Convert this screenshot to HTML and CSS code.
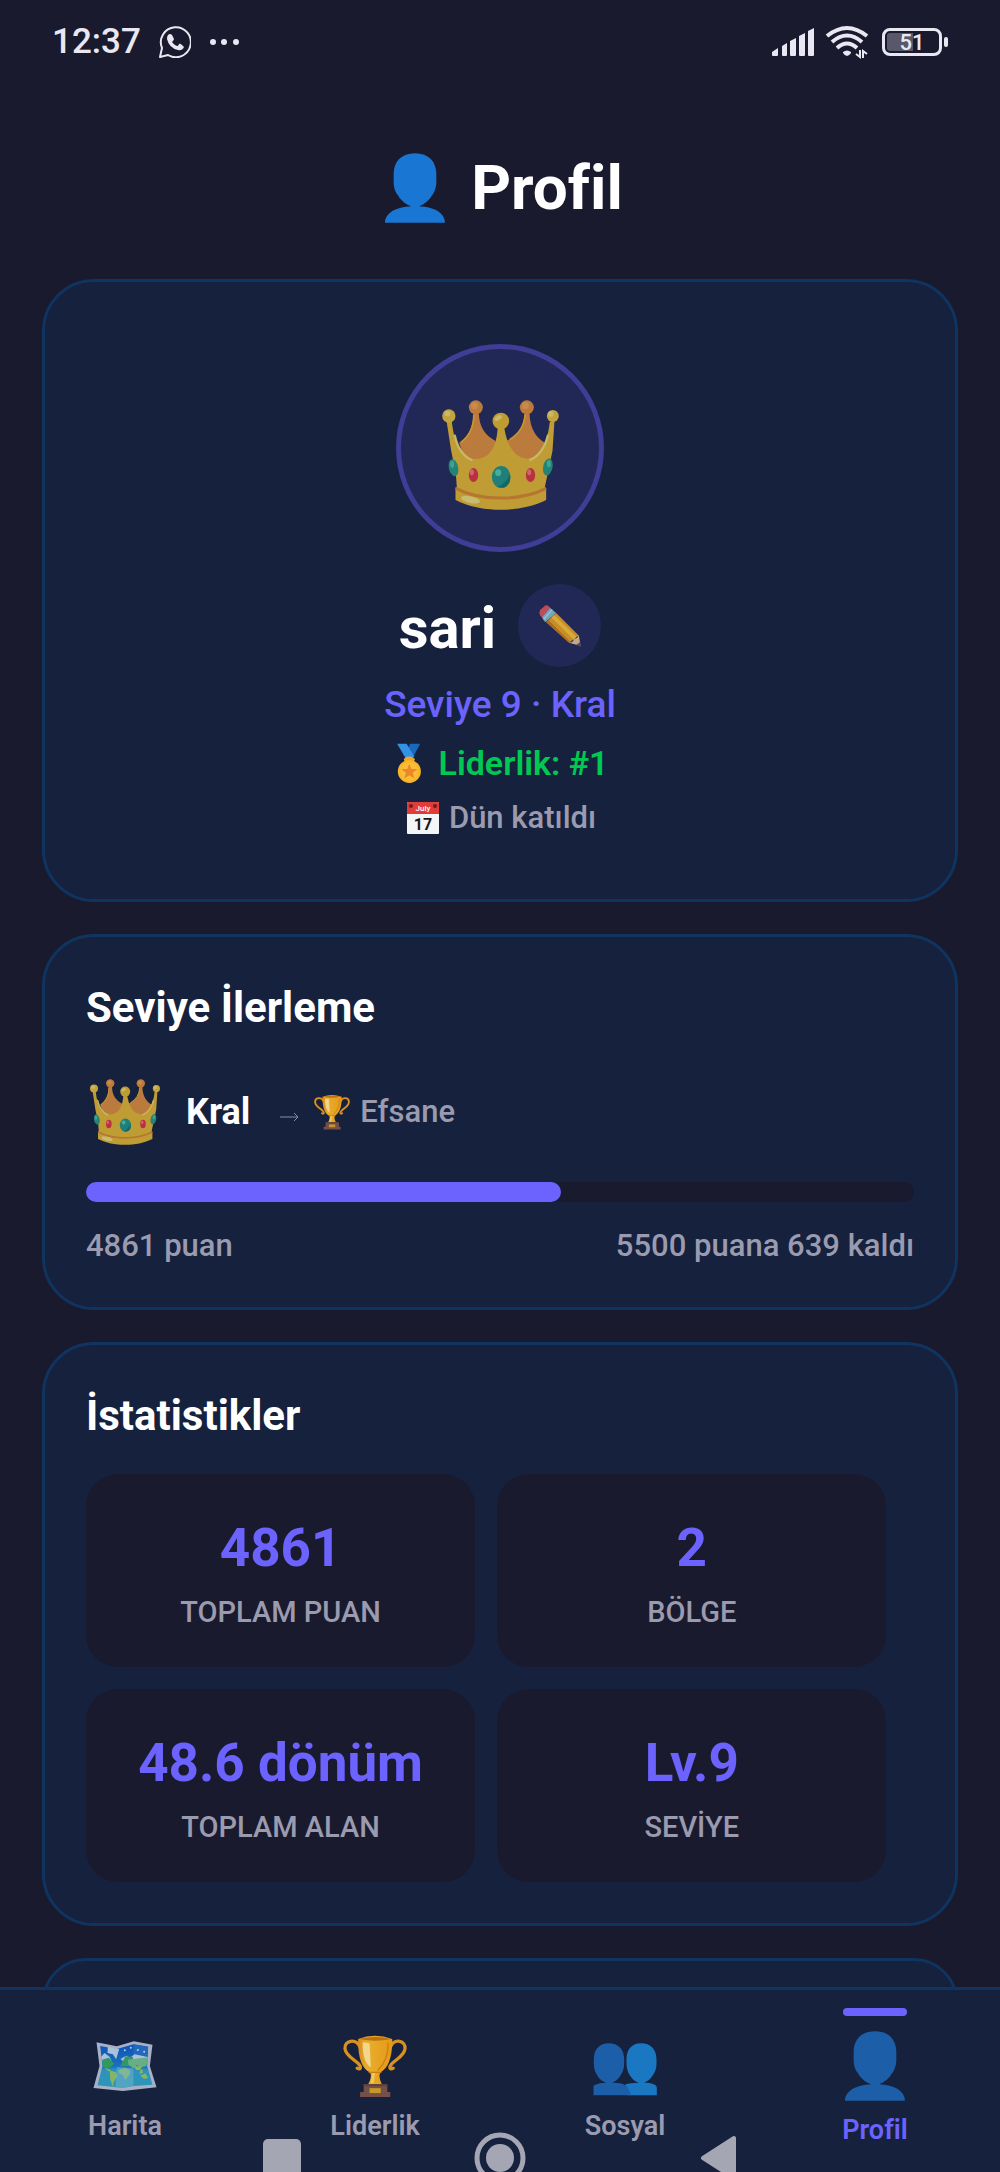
FILE: index.html
```html
<!DOCTYPE html>
<html lang="tr">
<head>
<meta charset="utf-8">
<meta name="viewport" content="width=device-width, initial-scale=1">
<title>Profil</title>
<link rel="stylesheet" href="styles.css">
</head>
<body>
<svg class="sprite" aria-hidden="true">
  <defs>
    <linearGradient id="map-sea" x1="0" y1="0" x2="0" y2="1">
      <stop offset="0" stop-color="#0e55bb"/><stop offset=".5" stop-color="#1b6fbd"/><stop offset=".6" stop-color="#2b93bd"/><stop offset="1" stop-color="#2f95b5"/>
    </linearGradient>
    <linearGradient id="cup-gold" x1="0" x2="1">
      <stop offset="0" stop-color="#d98a1c"/><stop offset=".25" stop-color="#e9ad2e"/><stop offset="1" stop-color="#e59a17"/>
    </linearGradient>
  </defs>
  <symbol id="person" viewBox="1158 458 180 209">
    <path d="M1248 458C1290 458 1312 484 1312 520V545C1312 562 1304 580 1298 586C1288 604 1270 614 1261 617C1306 619 1338 637 1338 667H1158C1158 637 1191 619 1237 617C1226 614 1206 602 1197 584C1190 577 1184 562 1184 545V520C1184 484 1206 458 1248 458Z"/>
  </symbol>
  <symbol id="people" viewBox="281 317 191 192">
    <path fill="#1a78c2" d="M425 345C453 345 471 363 471 393V408C471 434 449 460 434 463C455 463 472 468 472 478V501H385L378 468Q392 463 418 463C398 458 381 432 381 408V393C381 363 397 345 425 345Z"/>
    <path fill="#1c5ea8" d="M328 345C356 345 374 363 374 393V408C374 434 353 460 338 463C360 463 374 466 382 474L396 501H282V472Q296 463 320 463C302 460 283 434 283 408V393C283 363 300 345 328 345Z"/>
  </symbol>
  <symbol id="crown" viewBox="275 238 350 330">
    <path fill="#bb7b3d" d="M368 278C369 325 350 350 326 366L345 425H560L583 366C558 352 538 325 537 278H522C520 325 500 350 468 360L450 400L434 360C405 345 386 320 385 278Z"/>
    <circle cx="376" cy="260" r="21" fill="#bb7b3d"/><circle cx="529" cy="260" r="21" fill="#bb7b3d"/>
    <circle cx="372" cy="255" r="10" fill="#c98b4b"/><circle cx="525" cy="255" r="10" fill="#c98b4b"/>
    <path fill="none" stroke="#c8952f" stroke-width="5" d="M370 282Q370 335 332 365M524 282Q520 332 477 357"/>
    <path fill="#bf9c34" d="M288 300L304 303C313 380 335 415 378 415C420 412 440 375 442 312H460C468 375 492 414 532 414C570 410 590 370 598 303L612 300L606 390L583 500Q587 500 587 506V538C510 577 390 577 315 538V500H319L316 460L302 390Z"/>
    <circle cx="295" cy="286" r="20" fill="#c3a33b"/><circle cx="607" cy="286" r="18" fill="#c3a33b"/><circle cx="451" cy="301" r="25" fill="#bf9c30"/>
    <ellipse cx="291" cy="279" rx="9" ry="8" fill="#ccb86b"/><ellipse cx="601" cy="280" rx="8" ry="9" fill="#ccb86b"/><ellipse cx="443" cy="292" rx="12" ry="7" fill="#ccb86b" transform="rotate(-30 443 292)"/>
    <path fill="none" stroke="#c9b864" stroke-width="7" stroke-linecap="round" d="M313 345Q325 400 363 418M592 345Q578 400 540 417"/>
    <path fill="none" stroke="#b5762f" stroke-width="9" d="M316 503C390 542 510 542 587 503"/>
    <ellipse cx="360" cy="537" rx="29" ry="10" fill="#c8bc70" transform="rotate(12 360 537)"/>
    <ellipse cx="309" cy="441" rx="14" ry="26" fill="#248277" transform="rotate(-12 309 441)"/><ellipse cx="592" cy="439" rx="14" ry="26" fill="#248277" transform="rotate(12 592 439)"/>
    <ellipse cx="305" cy="431" rx="6" ry="11" fill="#3ba58d"/><ellipse cx="595" cy="429" rx="6" ry="11" fill="#3ba58d"/>
    <ellipse cx="452" cy="469" rx="28" ry="33" fill="#208079"/><path fill="#0f6a67" d="M440 499Q466 490 478 460Q484 492 460 501Z"/><ellipse cx="443" cy="456" rx="9" ry="10" fill="#46ac9d"/>
    <ellipse cx="369" cy="463" rx="14" ry="21" fill="#b93140"/><ellipse cx="540" cy="463" rx="14" ry="21" fill="#b93140"/>
    <ellipse cx="364" cy="455" rx="6" ry="9" fill="#cf6470"/><ellipse cx="536" cy="455" rx="6" ry="9" fill="#cf6470"/>
  </symbol>
  <symbol id="trophy" viewBox="1028 309 195 191">
    <path fill="none" stroke="#d8901f" stroke-width="10" stroke-linecap="round" d="M1079 345C1066 320 1032 326 1034 352C1038 382 1085 392 1081 411Q1078 416 1071 411M1173 345C1186 320 1219 326 1217 352C1213 382 1168 392 1171 411Q1174 416 1181 411"/>
    <path fill="url(#cup-gold)" d="M1074 322Q1125 302 1178 322C1179 380 1165 412 1142 424Q1134 436 1147 462H1104Q1118 436 1110 424C1086 412 1073 380 1074 322Z"/>
    <path fill="#b9720e" d="M1077 322Q1125 310 1175 322Q1125 333 1077 322Z"/>
    <path fill="#f2d68b" d="M1088 332L1109 335L1113 409Q1086 390 1088 332Z"/>
    <path fill="none" stroke="#c97e14" stroke-width="4" d="M1165 334Q1168 385 1134 418M1106 424H1145"/>
    <path fill="#f0c860" d="M1117 426H1126L1121 457H1112Z"/>
    <path fill="#75504a" d="M1091 460H1163V484H1172V499H1080V484H1091Z"/><path fill="#604039" d="M1091 460H1163V466H1091Z"/>
    <rect x="1109" y="472" width="34" height="15" fill="#c69824"/>
  </symbol>
  <symbol id="map" viewBox="281 309 191 192">
    <path fill="#a7b0c6" d="M291 334L352 346L403 331L459 341L451 405L471 469L370 480L282 471L300 405Z"/>
    <path fill="url(#map-sea)" d="M302 345L352 354L402 340L446 347L443 405L459 461L404 465L370 471L294 463L309 405Z"/>
    <path fill="#2269bd" d="M402 340L446 347L443 390L402 385Z"/>
    <path fill="#adc1d6" d="M305 378L315 366L330 377L336 390H308ZM363 384L380 374L392 380L405 370L445 378L443 390H370ZM325 347L343 351L359 354L350 385L340 370L324 366Z"/>
    <path fill="#319763" d="M308 386L328 380L344 398L333 408L322 414L309 405ZM362 406L378 376L400 378L402 405Z"/>
    <path fill="#66ae84" d="M385 386L445 379L441 405L424 409L411 403L402 412L387 402Z"/>
    <path fill="#86b663" d="M315 411L333 416L336 422L325 419ZM331 419L349 423L354 435L342 454L341 470L332 444ZM357 417L376 410L392 418L391 430L377 447L370 432L358 427ZM402 406H428L421 417H410ZM422 434L438 427L446 441L434 444ZM422 417L429 414L430 426L420 429Z"/>
    <path fill="#7fb8ce" opacity=".45" d="M352 408L402 412V465L370 471L348 467Z"/>
    <g fill="#bdcbe0"><circle cx="376" cy="358" r="3"/><circle cx="394" cy="350" r="3"/><circle cx="415" cy="357" r="3"/><circle cx="434" cy="362" r="3"/></g>
  </symbol>
</svg>

<div class="app">
  <header class="status">
    <div class="status-group">
      <time class="clock">12:37</time>
      <svg class="wa" width="32" height="32" viewBox="0 0 32 32" aria-label="WhatsApp" role="img">
        <path fill="none" stroke="#e9e8f2" stroke-width="2" stroke-linejoin="round" d="M1 31L3 22A15 15 0 1 1 9 29Z"/>
        <path fill="#e9e8f2" d="M9 9Q11 7 13 9L15 13Q15 14 13 16Q16 20 19 20L20 18Q21 17 23 19L25 21Q23 25 19 24Q10 22 8 13Q8 10 9 9Z"/>
      </svg>
      <svg width="30" height="8" viewBox="0 0 30 8" fill="#e9e8f2" aria-hidden="true"><circle cx="4" cy="4" r="3"/><circle cx="15" cy="4" r="3"/><circle cx="27" cy="4" r="3"/></svg>
    </div>
    <div class="status-group status-right">
      <svg width="42" height="32" viewBox="0 0 42 32" fill="#e9e8f2" aria-hidden="true">
        <path d="M0 26L6 22V29Q6 30 5 30H1Q0 30 0 29ZM10 20L15 17V29Q15 30 14 30H11Q10 30 10 29ZM18 15L24 12V29Q24 30 23 30H19Q18 30 18 29ZM27 10L33 7V29Q33 30 32 30H28Q27 30 27 29ZM36 5L42 2V29Q42 30 41 30H37Q36 30 36 29Z"/>
      </svg>
      <svg width="44" height="34" viewBox="0 0 44 34" aria-hidden="true">
        <g fill="none" stroke="#e9e8f2" stroke-width="4"><path d="M2 11Q22 -5 42 11M7 17Q22 4 37 17M12 23Q22 14 32 23"/></g>
        <path fill="#e9e8f2" d="M18 27Q22 24 26 27V28Q22 34 18 28Z"/>
        <path fill="none" stroke="#e9e8f2" stroke-width="2" d="M35 25V32L31 29M38 33V26L42 29"/>
      </svg>
      <div class="battery"><span class="battery-text">51</span></div>
    </div>
  </header>

  <main class="content">
    <h1 class="title"><svg class="title-icon" width="60" height="70" aria-hidden="true"><use href="#person"/></svg>Profil</h1>

    <section class="card profile">
      <div class="avatar"><svg width="117" height="110" aria-hidden="true"><use href="#crown"/></svg></div>
      <div class="name-row">
        <h2 class="name">sari</h2>
        <button class="edit" type="button" aria-label="Düzenle">
          <svg width="42" height="42" viewBox="564 138 127 127" aria-hidden="true">
            <path fill="#bd4c5b" d="M568 152L584 139Q594 138 600 151L578 179Q559 168 568 152Z"/>
            <path fill="#6fa5bd" d="M598 147L616 162L583 190L573 176Z"/><path fill="none" stroke="#9dc0cd" stroke-width="4" d="M604 152L578 182"/>
            <path fill="#c98d27" d="M616 162L684 230L655 252L586 190Z"/>
            <path fill="#d6aa3b" d="M610 168L677 234L668 242L602 176Z"/><path fill="#a96d20" d="M593 184L659 250L655 252L586 190Z"/>
            <path fill="#c2a98b" d="M684 228L690 262L655 252Q670 250 669 240Q682 240 684 228Z"/>
            <path fill="#51484f" d="M688 251L691 265L676 259Z"/>
          </svg>
        </button>
      </div>
      <p class="level">Seviye 9 · Kral</p>
      <p class="rank">
        <svg width="24" height="40" viewBox="142 552 70 118" aria-hidden="true">
          <path fill="#1769c0" d="M210 554H180L165 592H190Z"/><path fill="#3391e8" d="M142 554H170L193 593L167 597Z"/>
          <ellipse cx="178" cy="601" rx="16" ry="9" fill="#f3a51c"/>
          <circle cx="178" cy="636" r="34" fill="#f9b427"/><circle cx="178" cy="636" r="27" fill="#fbbc37"/>
          <path fill="#ed8627" d="M178 613L184 629H202L188 640L193 657L178 647L163 657L168 640L154 629H172Z"/>
        </svg>Liderlik: #1</p>
      <p class="joined">
        <svg width="32" height="32" viewBox="0 0 32 32" aria-hidden="true">
          <rect width="32" height="32" rx="1" fill="#f4f5f7"/><path fill="#e23c38" d="M0 1Q0 0 1 0H31Q32 0 32 1V12H0Z"/>
          <circle cx="4" cy="4" r="2" fill="#612129"/><circle cx="28" cy="4" r="2" fill="#612129"/>
          <text class="cal-month" x="16" y="9">July</text><text class="cal-day" x="16" y="28">17</text>
        </svg>Dün katıldı</p>
    </section>

    <section class="card">
      <h2 class="card-title">Seviye İlerleme</h2>
      <div class="level-row">
        <svg width="70" height="66" aria-hidden="true"><use href="#crown"/></svg>
        <span class="level-name">Kral</span>
        <span class="next">
          <svg class="arrow" width="20" height="20" viewBox="0 0 20 20" aria-hidden="true"><path fill="none" stroke="#8b8ca2" stroke-width="1" d="M0 15H18M14 11L18 15L14 19"/></svg>
          <svg width="36" height="36" aria-hidden="true"><use href="#trophy"/></svg>
          <span>Efsane</span>
        </span>
      </div>
      <div class="track" role="progressbar" aria-label="Seviye İlerleme" aria-valuemin="0" aria-valuemax="100" aria-valuenow="57"><div class="fill" style="width:57.4%"></div></div>
      <div class="points"><span>4861 puan</span><span>5500 puana 639 kaldı</span></div>
    </section>

    <section class="card">
      <h2 class="card-title">İstatistikler</h2>
      <div class="stats">
        <div class="stat"><strong class="stat-value">4861</strong><span class="stat-label">TOPLAM PUAN</span></div>
        <div class="stat"><strong class="stat-value">2</strong><span class="stat-label">BÖLGE</span></div>
        <div class="stat"><strong class="stat-value">48.6 dönüm</strong><span class="stat-label">TOPLAM ALAN</span></div>
        <div class="stat"><strong class="stat-value">Lv.9</strong><span class="stat-label">SEVİYE</span></div>
      </div>
    </section>

    <section class="card"></section>
  </main>

  <footer class="bottom">
    <nav class="tabs">
      <a class="tab" href="#harita"><span class="tab-icon"><svg width="64" height="64" aria-hidden="true"><use href="#map"/></svg></span>Harita</a>
      <a class="tab" href="#liderlik"><span class="tab-icon"><svg width="64" height="64" aria-hidden="true"><use href="#trophy"/></svg></span>Liderlik</a>
      <a class="tab" href="#sosyal"><span class="tab-icon"><svg width="64" height="64" aria-hidden="true"><use href="#people"/></svg></span>Sosyal</a>
      <a class="tab tab-active" href="#profil" aria-current="page"><span class="tab-icon"><svg width="60" height="70" aria-hidden="true"><use href="#person"/></svg></span>Profil</a>
    </nav>
    <div class="system">
      <button class="sys" type="button" aria-label="Son uygulamalar"><svg width="52" height="52" viewBox="0 0 52 52"><rect x="7" y="7" width="38" height="38" rx="5" fill="#a4a7b3"/></svg></button>
      <button class="sys" type="button" aria-label="Ana ekran"><svg width="52" height="52" viewBox="0 0 52 52"><circle cx="26" cy="26" r="23" fill="none" stroke="#a4a7b3" stroke-width="5"/><circle cx="26" cy="26" r="14" fill="#a4a7b3"/></svg></button>
      <button class="sys" type="button" aria-label="Geri"><svg width="52" height="52" viewBox="0 0 52 52"><path d="M11 26L42 6V46Z" fill="#a4a7b3" stroke="#a4a7b3" stroke-width="4" stroke-linejoin="round"/></svg></button>
    </div>
  </footer>
</div>
</body>
</html>
```
FILE: styles.css
```css
:root {
  --bg: #1a1a2e;
  --card: #16213e;
  --line: #0f3460;
  --accent: #6c63ff;
  --muted: #9b9bb0;
}

* { box-sizing: border-box; }

body {
  margin: 0;
  background: var(--bg);
  color: #fff;
  font-family: Roboto, "Noto Sans", sans-serif;
}

h1, h2, p { margin: 0; }
svg { display: block; flex: none; }
button { border: 0; padding: 0; background: none; }

.sprite { position: absolute; width: 0; height: 0; }

.app {
  display: flex;
  flex-direction: column;
  height: 100vh;
}

/* Status bar */
.status {
  display: flex;
  justify-content: space-between;
  align-items: center;
  height: 84px;
  padding: 0 52px;
  flex: none;
  color: #e9e8f2;
}
.status-group { display: flex; align-items: center; gap: 18px; }
.status-right { gap: 11px; }
.clock { font-size: 35px; font-weight: 500; line-height: 42px; }
.battery {
  position: relative;
  width: 60px;
  height: 28px;
  margin: 0 6px 0 2px;
  border: 3px solid #e9e8f2;
  border-radius: 8px;
  background: linear-gradient(90deg, #59586b 52%, transparent 52%) content-box;
  padding: 2px;
}
.battery::after {
  content: "";
  position: absolute;
  right: -9px;
  top: 6px;
  width: 4px;
  height: 10px;
  border-radius: 2px;
  background: #e9e8f2;
}
.battery-text {
  display: block;
  font-size: 22px;
  font-weight: 500;
  line-height: 20px;
  text-align: center;
}

/* Scrolling content */
.content {
  flex: 1;
  min-height: 0;
  overflow-y: auto;
  scrollbar-width: none;
  padding: 0 42px 32px;
}
.title {
  display: flex;
  justify-content: center;
  align-items: center;
  gap: 26px;
  padding: 66px 0 53px 8px;
  font-size: 62px;
  line-height: 76px;
  font-weight: 700;
}
.title-icon { fill: #1976d2; }

.card {
  margin-bottom: 32px;
  padding: 41px;
  border: 3px solid var(--line);
  border-radius: 52px;
  background: var(--card);
}
.card-title { font-size: 42px; font-weight: 700; line-height: 60px; }

/* Profile card */
.profile {
  display: flex;
  flex-direction: column;
  align-items: center;
  padding: 62px 41px;
}
.avatar {
  display: grid;
  place-items: center;
  width: 208px;
  height: 208px;
  margin-bottom: 32px;
  padding-top: 14px;
  border: 5px solid #403d96;
  border-radius: 50%;
  background: #212856;
}
.name-row { display: flex; align-items: center; gap: 22px; }
.name { padding-top: 4px; font-size: 58px; font-weight: 700; line-height: 68px; }
.edit {
  display: grid;
  place-items: center;
  width: 83px;
  height: 83px;
  border-radius: 50%;
  background: #212856;
}
.level {
  margin-top: 17px;
  color: var(--accent);
  font-size: 37px;
  font-weight: 500;
  line-height: 42px;
}
.rank, .joined { display: flex; align-items: center; }
.rank {
  gap: 18px;
  margin-top: 16px;
  padding-left: 5px;
  color: #00c853;
  font-size: 34px;
  font-weight: 600;
  line-height: 42px;
}
.joined {
  gap: 10px;
  margin-top: 15px;
  padding-left: 3px;
  color: var(--muted);
  font-size: 31px;
  font-weight: 500;
  line-height: 38px;
}
.cal-month { font-size: 8px; font-weight: 500; fill: #fff; text-anchor: middle; }
.cal-day { font-size: 16px; font-weight: 700; fill: #16161a; text-anchor: middle; }

/* Level progress */
.level-row {
  display: flex;
  align-items: center;
  gap: 26px;
  margin: 41px 0 37px 4px;
}
.level-name { font-size: 36px; font-weight: 700; line-height: 42px; }
.next {
  display: flex;
  align-items: center;
  gap: 10px;
  margin-left: 4px;
  color: var(--muted);
  font-size: 31px;
  font-weight: 500;
  line-height: 36px;
}
.arrow { margin-right: 4px; }
.track {
  height: 20px;
  border-radius: 10px;
  background: var(--bg);
}
.fill { height: 20px; border-radius: 10px; background: var(--accent); }
.points {
  display: flex;
  justify-content: space-between;
  margin-top: 24px;
  color: var(--muted);
  font-size: 31px;
  font-weight: 500;
  line-height: 40px;
}

/* Statistics */
.stats {
  display: grid;
  grid-template-columns: 47% 47%;
  gap: 22px;
  margin-top: 28px;
}
.stat {
  display: flex;
  flex-direction: column;
  align-items: center;
  gap: 15px;
  padding: 42px 20px 37px;
  border-radius: 32px;
  background: var(--bg);
}
.stat-value { color: var(--accent); font-size: 53px; font-weight: 700; line-height: 64px; }
.stat-label { color: var(--muted); font-size: 29px; font-weight: 500; line-height: 35px; }

/* Bottom navigation */
.bottom {
  position: relative;
  flex: none;
  border-top: 3px solid var(--line);
  background: var(--card);
}
.tabs { display: grid; grid-template-columns: repeat(4, 1fr); padding: 18px 0 25px; }
.tab {
  position: relative;
  display: flex;
  flex-direction: column;
  align-items: center;
  gap: 8px;
  padding-top: 23px;
  color: var(--muted);
  font-size: 27px;
  font-weight: 600;
  line-height: 34px;
  text-decoration: none;
}
.tab-icon { display: flex; align-items: center; height: 70px; }
.tab-active { gap: 12px; color: var(--accent); }
.tab-active .tab-icon { fill: #1c5ea8; }
.tab-active::before {
  content: "";
  position: absolute;
  top: 0;
  width: 64px;
  height: 8px;
  border-radius: 4px;
  background: var(--accent);
}

/* Device buttons drawn over the lower edge of the tabs */
.system {
  position: absolute;
  inset: auto 0 0;
  display: flex;
  justify-content: center;
  align-items: flex-start;
  gap: 166px;
  height: 40px;
  overflow: hidden;
  pointer-events: none;
}
.sys { width: 52px; height: 52px; pointer-events: auto; }
```
